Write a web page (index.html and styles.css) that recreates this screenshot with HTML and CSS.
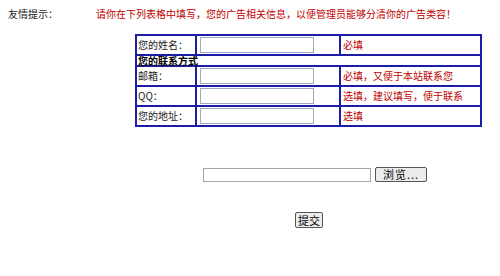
FILE: index.html
```html
<!DOCTYPE html>
<html lang="zh-CN">
<head>
    <meta charset="UTF-8">
    <title>广告信息</title>
    <link rel="stylesheet" href="styles.css">
</head>
<body>
    <div class="tip">
        <span class="tip-label">友情提示：</span>
        <span class="tip-text">请你在下列表格中填写，您的广告相关信息，以便管理员能够分清你的广告类容！</span>
    </div>

    <table class="ad-table">
        <tr>
            <td class="label">您的姓名：</td>
            <td class="field"><input type="text"></td>
            <td class="note">必填</td>
        </tr>
        <tr>
            <td class="section" colspan="3">您的联系方式</td>
        </tr>
        <tr>
            <td class="label">邮箱：</td>
            <td class="field"><input type="text"></td>
            <td class="note">必填，又便于本站联系您</td>
        </tr>
        <tr>
            <td class="label">QQ：</td>
            <td class="field"><input type="text"></td>
            <td class="note">选填，建议填写，便于联系</td>
        </tr>
        <tr>
            <td class="label">您的地址：</td>
            <td class="field"><input type="text"></td>
            <td class="note">选填</td>
        </tr>
    </table>

    <div class="upload">
        <span class="file-box"></span>
        <button class="btn browse" type="button">浏览...</button>
    </div>

    <div class="submit-row">
        <button class="btn" type="submit">提交</button>
    </div>
</body>
</html>
```

FILE: styles.css
```css
/* 基本样式 */
body {
    font-family: "Noto Sans CJK SC", "DejaVu Sans", sans-serif;
    font-size: 10px;
    color: #222;
    margin: 8px;
    background-color: #fff;
}
.tip {
    display: flex;
    height: 12px;
    line-height: 12px;
}
.tip-label {
    width: 88px;
}
.tip-text {
    color: #c00000;
}
.ad-table {
    margin: 14px 0 0 127px;
    width: 347px;
    border-collapse: collapse;
    border: 2px solid #1c1ca6;
}
.ad-table td {
    border: 2px solid #1c1ca6;
    padding: 0 0 0 1px;
    height: 18px;
    line-height: 12px;
    white-space: nowrap;
}
.ad-table .label {
    width: 57px;
}
.ad-table .field {
    width: 139px;
    padding-left: 3px;
}
.ad-table .note {
    color: #c00000;
    padding-left: 2px;
}
.ad-table .section {
    height: 9px;
    line-height: 9px;
    font-weight: bold;
    color: #000;
}
.ad-table input {
    display: block;
    width: 110px;
    height: 12px;
    margin: 0;
    padding: 1px;
    border: 1px solid #a0a8c8;
    font-size: 10px;
}
.upload {
    display: flex;
    align-items: center;
    gap: 4px;
    margin: 40px 0 0 195px;
}
.file-box {
    width: 166px;
    height: 12px;
    border: 1px solid #a6a6a6;
}
.btn {
    font-family: "Noto Sans CJK SC", "DejaVu Sans", sans-serif;
    font-size: 11px;
    height: 15px;
    line-height: 11px;
    padding: 0 3px;
    border: 1px solid #555;
    border-radius: 2px;
    background-color: #ececec;
    color: #000;
}
.browse {
    width: 52px;
    letter-spacing: 1px;
}
.submit-row {
    margin: 30px 0 0 287px;
}
.submit-row .btn {
    width: 28px;
    height: 16px;
    padding: 0;
}
```
